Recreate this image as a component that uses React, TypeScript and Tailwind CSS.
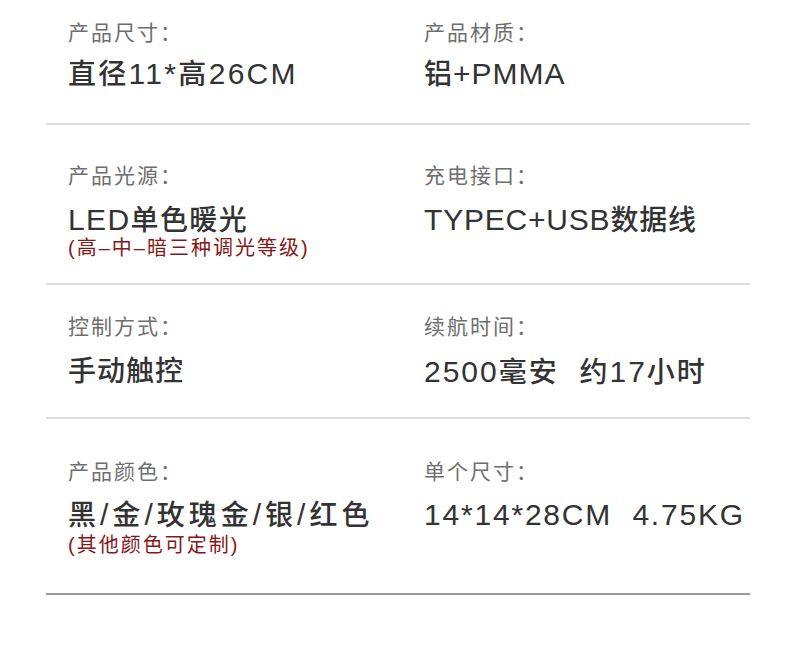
import React from "react";

const font = { fontFamily: '"Liberation Sans", "Noto Sans CJK SC", sans-serif' };

function V({ text, className = "" }: { text: string; className?: string }) {
  const parts = text.split(/([\x00-\x7F]+)/).filter((p) => p.length > 0);
  return (
    <div className={"text-[28px] leading-[28px] h-[28px] font-medium text-[#333333] whitespace-pre " + className}>
      {parts.map((p, i) =>
        /^[\x00-\x7F]+$/.test(p) ? (
          <span key={i} className="text-[30px]">{p}</span>
        ) : (
          <span key={i}>{p}</span>
        )
      )}
    </div>
  );
}

function L({ text }: { text: string }) {
  return <div className="text-[21px] leading-[21px] h-[21px] tracking-[2px] text-[#6e6e6e] whitespace-pre">{text}</div>;
}

function N({ text, className = "" }: { text: string; className?: string }) {
  return <div className={"text-[20px] leading-[20px] h-[20px] tracking-[2px] text-[#861717] whitespace-pre " + className}>{text}</div>;
}

export default function App() {
  return (
    <div className="w-[790px] h-[650px] bg-white" style={font}>
      <div className="ml-[46px] w-[704px]">
        {/* Row 1 */}
        <div className="grid grid-cols-[356px_1fr] pl-[22px] pt-[22px] border-b-2 border-[#dcdcdc] h-[125px]">
          <div className="flex flex-col">
            <L text="产品尺寸：" />
            <V text="直径11*高26CM" className="mt-[17px] tracking-[2.3px]" />
          </div>
          <div className="flex flex-col">
            <L text="产品材质：" />
            <V text="铝+PMMA" className="mt-[17px] tracking-[1px]" />
          </div>
        </div>
        {/* Row 2 */}
        <div className="grid grid-cols-[356px_1fr] pl-[22px] pt-[40px] border-b-2 border-[#dcdcdc] h-[160px]">
          <div className="flex flex-col">
            <L text="产品光源：" />
            <V text="LED单色暖光" className="mt-[20px] tracking-[1.4px]" />
            <N text="(高–中–暗三种调光等级)" className="mt-[4px]" />
          </div>
          <div className="flex flex-col">
            <L text="充电接口：" />
            <V text="TYPEC+USB数据线" className="mt-[20px] tracking-[0.8px]" />
          </div>
        </div>
        {/* Row 3 */}
        <div className="grid grid-cols-[356px_1fr] pl-[22px] pt-[31px] border-b-2 border-[#dcdcdc] h-[134px]">
          <div className="flex flex-col">
            <L text="控制方式：" />
            <V text="手动触控" className="mt-[21px] tracking-[1px]" />
          </div>
          <div className="flex flex-col">
            <L text="续航时间：" />
            <V text="2500毫安  约17小时" className="mt-[21px] tracking-[2px]" />
          </div>
        </div>
        {/* Row 4 */}
        <div className="grid grid-cols-[356px_1fr] pl-[22px] pt-[42px] border-b-2 border-[#9a9a9a] h-[176px]">
          <div className="flex flex-col">
            <L text="产品颜色：" />
            <V text="黑/金/玫瑰金/银/红色" className="mt-[19px] tracking-[4px]" />
            <N text="(其他颜色可定制)" className="mt-[6px]" />
          </div>
          <div className="flex flex-col">
            <L text="单个尺寸：" />
            <V text="14*14*28CM  4.75KG" className="mt-[19px] tracking-[1.8px]" />
          </div>
        </div>
      </div>
    </div>
  );
}
